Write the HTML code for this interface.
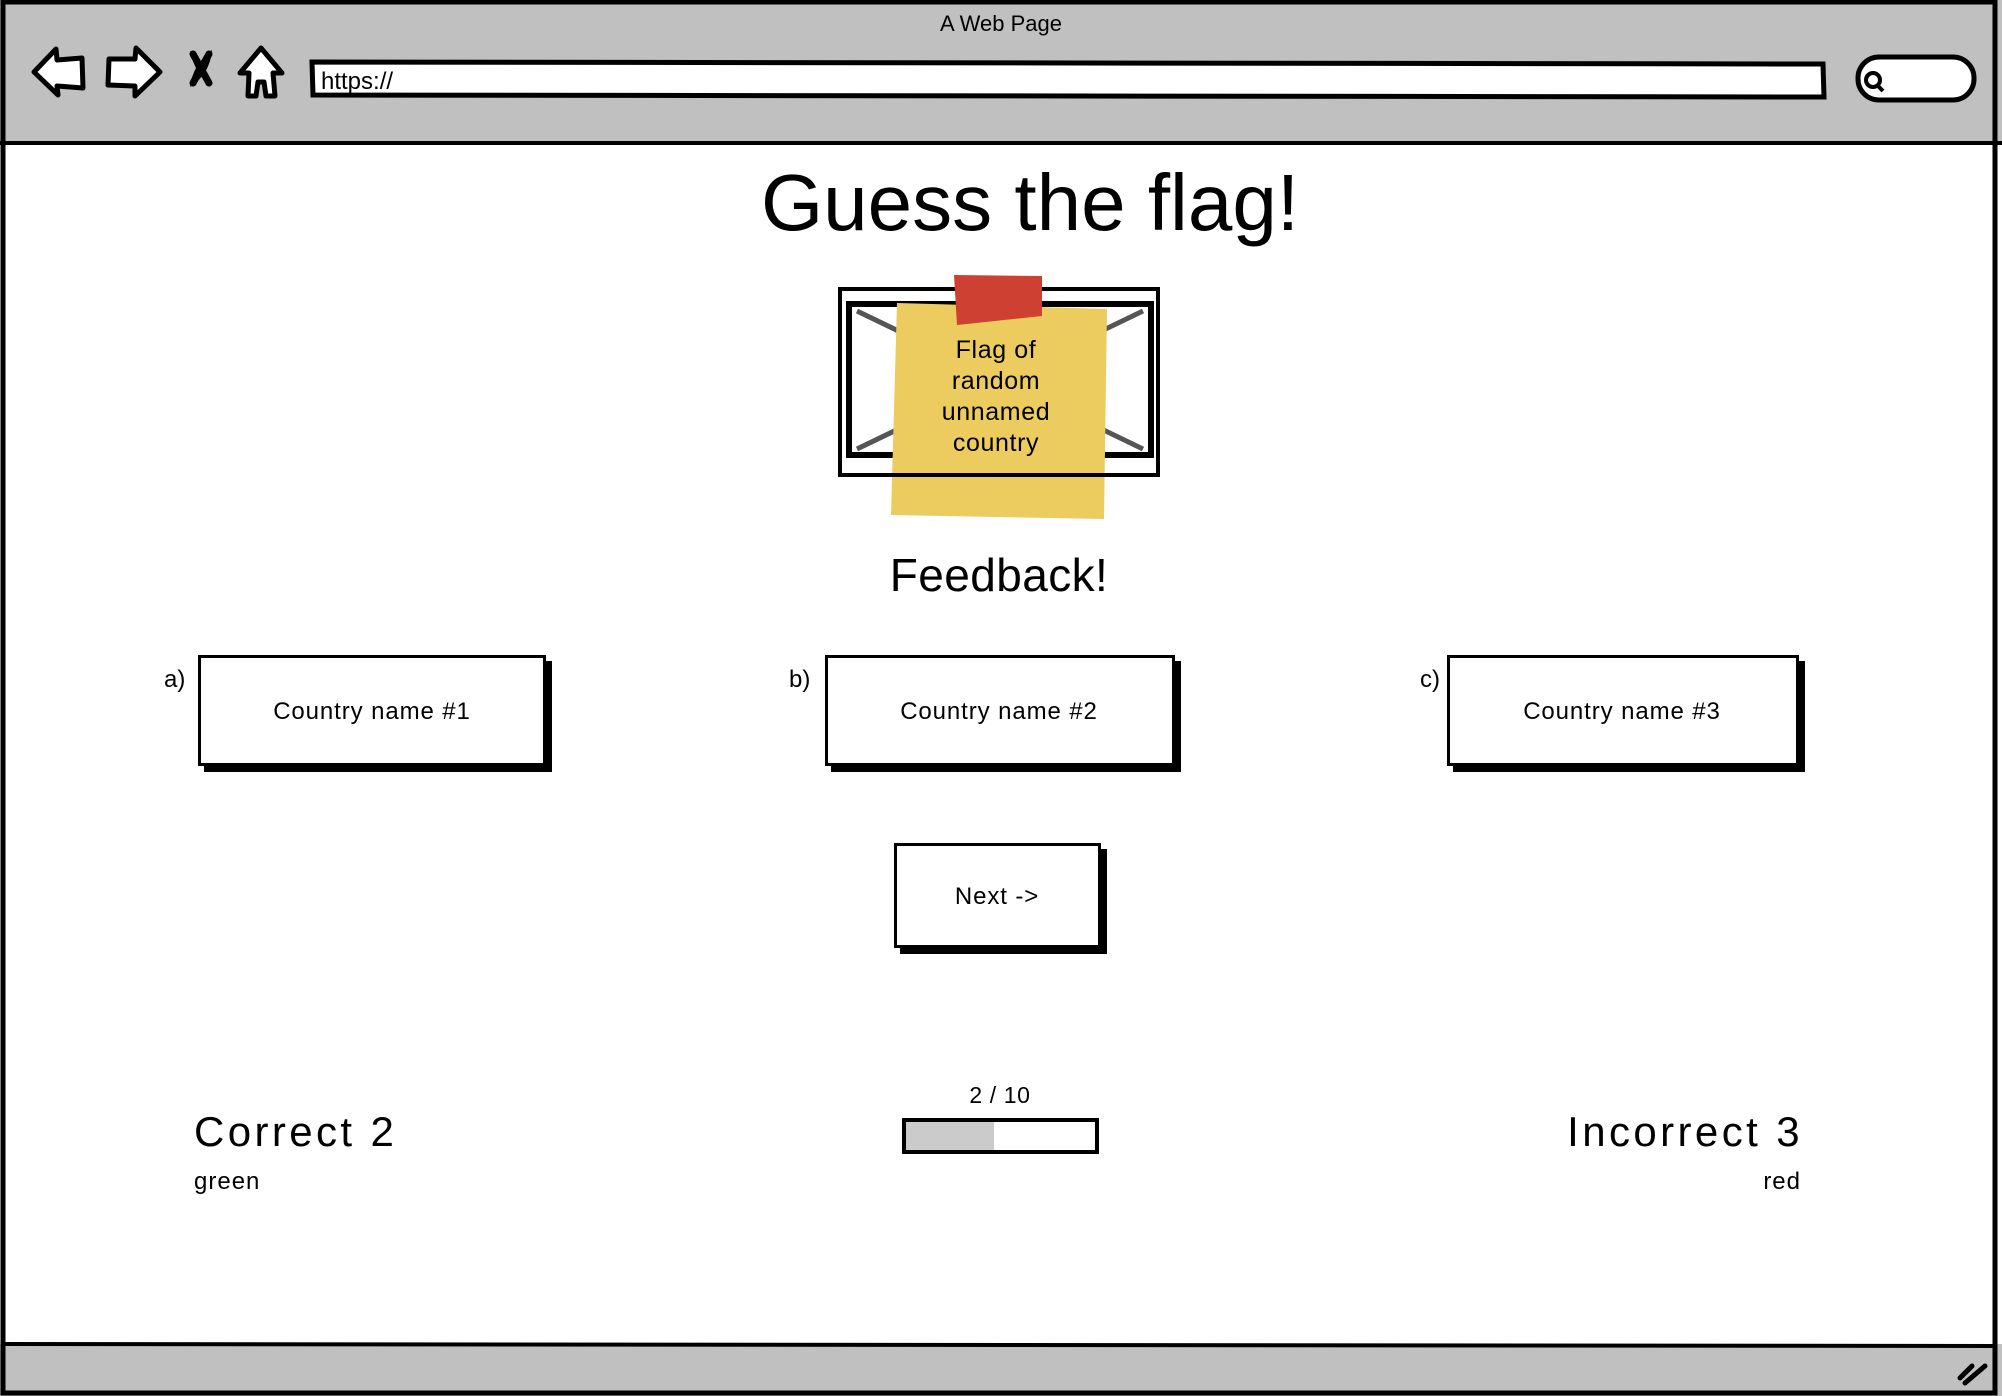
<!DOCTYPE html>
<html><head><meta charset="utf-8">
<style>
html,body{margin:0;padding:0;}
body{width:2002px;height:1396px;position:relative;overflow:hidden;background:#fff;font-family:"Liberation Sans",sans-serif;color:#000;}
.t{position:absolute;line-height:1;white-space:nowrap;}
.c{transform:translateX(-50%);}
.r{transform:translateX(-100%);}
.btn{position:absolute;background:#fff;border:3px solid #000;box-shadow:6px 6px 0 #000;box-sizing:border-box;}
.bt{letter-spacing:0.9px;}
</style></head>
<body>
<svg width="2002" height="1396" style="position:absolute;left:0;top:0">
  <rect x="0" y="0" width="2002" height="143" fill="#c0c0c0"/>
  <rect x="0" y="1344" width="2002" height="52" fill="#c0c0c0"/>
  <line x1="0" y1="143" x2="2002" y2="143" stroke="#000" stroke-width="4"/>
  <line x1="4" y1="1344" x2="1996" y2="1346" stroke="#000" stroke-width="4"/>
  <rect x="3" y="2" width="1992" height="1391" fill="none" stroke="#000" stroke-width="5"/>
  <path d="M34 72 L56 49 L57 60 L82 58 L83 88 L57 86 L58 95 Z" fill="#fff" stroke="#000" stroke-width="5" stroke-linejoin="round"/>
  <path d="M160 72 L136 48 L135 59 L109 59 L108 85 L135 86 L135 96 Z" fill="#fff" stroke="#000" stroke-width="5" stroke-linejoin="round"/>
  <path d="M190 51 Q205 62 211 86 Q196 76 190 51 Z" fill="#000"/>
  <path d="M212 50 Q210 74 190 87 Q193 64 212 50 Z" fill="#000"/>
  <line x1="193" y1="54" x2="209" y2="83" stroke="#000" stroke-width="7" stroke-linecap="round"/>
  <line x1="209" y1="54" x2="193" y2="83" stroke="#000" stroke-width="7" stroke-linecap="round"/>
  <path d="M261 48 L282 73 L273 73 L275 96 L266 96 L264 82 L258 82 L256 96 L248 96 L249 73 L240 73 Z" fill="#fff" stroke="#000" stroke-width="5" stroke-linejoin="round"/>
  <path d="M312 62 L1823 64 L1824 97 L313 95 Z" fill="#fff" stroke="#000" stroke-width="5"/>
  <rect x="1858" y="57" width="116" height="43" rx="21" fill="#fff" stroke="#000" stroke-width="5"/>
  <circle cx="1873" cy="80" r="7" fill="none" stroke="#000" stroke-width="4"/>
  <line x1="1877" y1="85" x2="1883" y2="91" stroke="#000" stroke-width="4"/>
  <line x1="1960" y1="1378" x2="1972" y2="1366" stroke="#000" stroke-width="5" stroke-linecap="round"/>
  <line x1="1965" y1="1383" x2="1985" y2="1366" stroke="#000" stroke-width="5" stroke-linecap="round"/>
  <rect x="840" y="289" width="318" height="186" fill="#fff" stroke="#000" stroke-width="4"/>
  <rect x="849" y="304" width="302" height="151" fill="#fff" stroke="#000" stroke-width="6"/>
  <line x1="857" y1="311" x2="1143" y2="449" stroke="#555" stroke-width="5"/>
  <line x1="1143" y1="311" x2="857" y2="449" stroke="#555" stroke-width="5"/>
  <path d="M897 303 L1107 309 L1104 519 L891 515 Z" fill="#eccb5f"/>
  <path d="M954 275 L1042 276 L1042 316 L957 325 Z" fill="#cd4032"/>
  <line x1="840" y1="475" x2="1158" y2="475" stroke="#000" stroke-width="4"/>
  <rect x="904" y="1120" width="193" height="32" fill="#fff" stroke="#000" stroke-width="4"/>
  <rect x="906" y="1122" width="88" height="28" fill="#cbcbcb"/>
</svg>

<div class="t c" style="left:1001px;top:13px;font-size:22px;">A Web Page</div>
<div class="t" style="left:321px;top:70px;font-size:24px;">https://</div>

<div class="t c" style="left:1030px;top:163px;font-size:80px;">Guess the flag!</div>

<div class="t c" style="left:996px;top:335px;font-size:25px;line-height:31px;text-align:center;white-space:normal;width:200px;letter-spacing:0.6px;">Flag of<br>random<br>unnamed<br>country</div>

<div class="t c" style="left:999px;top:552px;font-size:46px;letter-spacing:0.4px;">Feedback!</div>

<div class="t" style="left:164px;top:668px;font-size:24px;">a)</div>
<div class="t" style="left:789px;top:668px;font-size:24px;">b)</div>
<div class="t" style="left:1420px;top:668px;font-size:24px;">c)</div>

<div class="btn" style="left:198px;top:655px;width:348px;height:111px;"></div>
<div class="btn" style="left:825px;top:655px;width:350px;height:111px;"></div>
<div class="btn" style="left:1447px;top:655px;width:352px;height:111px;"></div>
<div class="t c bt" style="left:372px;top:700px;font-size:24px;">Country name #1</div>
<div class="t c bt" style="left:999px;top:700px;font-size:24px;">Country name #2</div>
<div class="t c bt" style="left:1622px;top:700px;font-size:24px;">Country name #3</div>

<div class="btn" style="left:894px;top:843px;width:207px;height:105px;"></div>
<div class="t c bt" style="left:997px;top:885px;font-size:24px;">Next -&gt;</div>

<div class="t c" style="left:1000px;top:1084px;font-size:23px;letter-spacing:0.6px;">2 / 10</div>

<div class="t" style="left:194px;top:1111px;font-size:42px;letter-spacing:3.4px;">Correct 2</div>
<div class="t" style="left:194px;top:1170px;font-size:24px;letter-spacing:1px;">green</div>
<div class="t r" style="left:1803px;top:1111px;font-size:42px;letter-spacing:3.4px;">Incorrect 3</div>
<div class="t r" style="left:1801px;top:1170px;font-size:24px;letter-spacing:1px;">red</div>
</body></html>
